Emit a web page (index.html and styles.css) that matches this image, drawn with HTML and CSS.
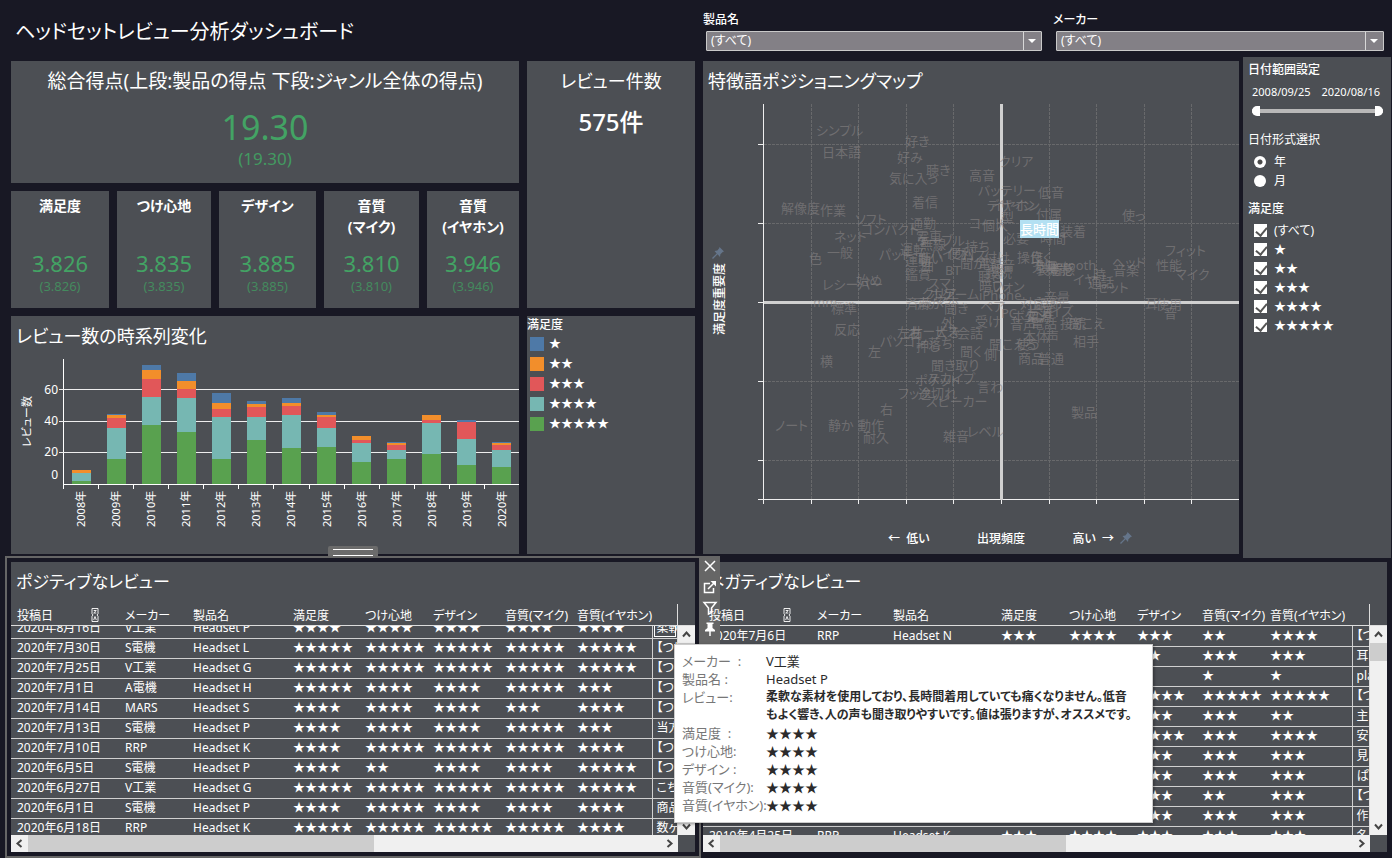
FILE: index.html
```html
<!DOCTYPE html>
<html lang="ja">
<head>
<meta charset="utf-8">
<title>ヘッドセットレビュー分析ダッシュボード</title>
<link rel="stylesheet" href="styles.css">
</head>
<body>
<svg class="sprite" aria-hidden="true">
  <symbol id="i-pin" viewBox="0 0 14 14"><path d="M8.500 1l4.500 4.500-1.300.4-2.300 2.300-.4 2.800L6.600 8.300 2 13l-1-1 4.700-4.600L3.500 5l2.800-.4L8.200 2.300z"/></symbol>
  <symbol id="i-sort" viewBox="0 0 8 14"><path fill="none" stroke="#fff" stroke-width=".9" d="M1 .5h6v5.200L6 7l1 1.300v5.200H1V8.300L2 7 1 5.700zM2.700 2.500h2.600L2.700 5h2.600M2.700 12L4 8.500 5.300 12"/></symbol>
  <symbol id="i-left" viewBox="0 0 17 17"><path fill="none" stroke="#444" stroke-width="2" d="M10.500 5l-4 3.500 4 3.500"/></symbol>
  <symbol id="i-right" viewBox="0 0 17 17"><path fill="none" stroke="#444" stroke-width="2" d="M6.500 5l4 3.500-4 3.500"/></symbol>
  <symbol id="i-up" viewBox="0 0 17 17"><path fill="none" stroke="#444" stroke-width="2" d="M5 10.500l3.500-4 3.500 4"/></symbol>
  <symbol id="i-down" viewBox="0 0 17 17"><path fill="none" stroke="#444" stroke-width="2" d="M5 6.500l3.500 4 3.500-4"/></symbol>
</svg>

<header class="header">
  <h1 class="title">ヘッドセットレビュー分析ダッシュボード</h1>
  <div class="filters">
    <div class="filter">
      <label for="product">製品名</label>
      <div class="select"><select id="product"><option>(すべて)</option></select></div>
    </div>
    <div class="filter">
      <label for="maker">メーカー</label>
      <div class="select"><select id="maker"><option>(すべて)</option></select></div>
    </div>
  </div>
</header>

<main>
<section class="upper">
  <div class="left">
    <section class="panel total">
      <h2>総合得点(上段:製品の得点 下段:ジャンル全体の得点)</h2>
      <p class="total-score">19.30</p>
      <p class="total-sub">(19.30)</p>
    </section>
    <section class="panel count">
      <h2>レビュー件数</h2>
      <p class="count-value">575件</p>
    </section>
    <div class="scores">
      <section class="panel score"><h3>満足度</h3><p class="score-value">3.826</p><p class="score-sub">(3.826)</p></section>
      <section class="panel score"><h3>つけ心地</h3><p class="score-value">3.835</p><p class="score-sub">(3.835)</p></section>
      <section class="panel score"><h3>デザイン</h3><p class="score-value">3.885</p><p class="score-sub">(3.885)</p></section>
      <section class="panel score"><h3>音質<br>(マイク)</h3><p class="score-value">3.810</p><p class="score-sub">(3.810)</p></section>
      <section class="panel score"><h3>音質<br>(イヤホン)</h3><p class="score-value">3.946</p><p class="score-sub">(3.946)</p></section>
    </div>
    <section class="panel trend">
      <h2>レビュー数の時系列変化</h2>
      <div class="chart">
        <div class="y-title">レビュー数</div>
        <div class="y-axis"><span>60</span><span>40</span><span>20</span><span class="zero">0</span></div>
        <div class="plot-col">
          <div class="plot">
            <i class="line l60"></i><i class="line l40"></i><i class="line l20"></i>
            <div class="bar"><b class="s2" style="--v:2"></b><b class="s4" style="--v:5"></b><b class="s5" style="--v:2"></b></div>
            <div class="bar"><b class="s1" style="--v:1"></b><b class="s2" style="--v:2"></b><b class="s3" style="--v:6"></b><b class="s4" style="--v:20"></b><b class="s5" style="--v:16"></b></div>
            <div class="bar"><b class="s1" style="--v:3"></b><b class="s2" style="--v:6"></b><b class="s3" style="--v:11"></b><b class="s4" style="--v:18"></b><b class="s5" style="--v:38"></b></div>
            <div class="bar"><b class="s1" style="--v:5"></b><b class="s2" style="--v:5"></b><b class="s3" style="--v:6"></b><b class="s4" style="--v:22"></b><b class="s5" style="--v:33"></b></div>
            <div class="bar"><b class="s1" style="--v:6"></b><b class="s2" style="--v:4"></b><b class="s3" style="--v:5"></b><b class="s4" style="--v:27"></b><b class="s5" style="--v:16"></b></div>
            <div class="bar"><b class="s1" style="--v:2"></b><b class="s2" style="--v:2"></b><b class="s3" style="--v:6"></b><b class="s4" style="--v:15"></b><b class="s5" style="--v:28"></b></div>
            <div class="bar"><b class="s1" style="--v:3"></b><b class="s2" style="--v:2"></b><b class="s3" style="--v:6"></b><b class="s4" style="--v:21"></b><b class="s5" style="--v:23"></b></div>
            <div class="bar"><b class="s1" style="--v:2"></b><b class="s2" style="--v:1"></b><b class="s3" style="--v:7"></b><b class="s4" style="--v:12"></b><b class="s5" style="--v:24"></b></div>
            <div class="bar"><b class="s2" style="--v:3"></b><b class="s3" style="--v:2"></b><b class="s4" style="--v:12"></b><b class="s5" style="--v:14"></b></div>
            <div class="bar"><b class="s1" style="--v:1"></b><b class="s2" style="--v:1"></b><b class="s3" style="--v:3"></b><b class="s4" style="--v:6"></b><b class="s5" style="--v:16"></b></div>
            <div class="bar"><b class="s2" style="--v:3"></b><b class="s3" style="--v:2"></b><b class="s4" style="--v:20"></b><b class="s5" style="--v:19"></b></div>
            <div class="bar"><b class="s1" style="--v:1"></b><b class="s3" style="--v:11"></b><b class="s4" style="--v:17"></b><b class="s5" style="--v:12"></b></div>
            <div class="bar"><b class="s1" style="--v:1"></b><b class="s2" style="--v:1"></b><b class="s3" style="--v:3"></b><b class="s4" style="--v:11"></b><b class="s5" style="--v:11"></b></div>
          </div>
          <div class="years"><span>2008年</span><span>2009年</span><span>2010年</span><span>2011年</span><span>2012年</span><span>2013年</span><span>2014年</span><span>2015年</span><span>2016年</span><span>2017年</span><span>2018年</span><span>2019年</span><span>2020年</span></div>
        </div>
      </div>
    </section>
    <section class="panel legend">
      <h4>満足度</h4>
      <ul>
        <li><b class="s1"></b>★</li>
        <li><b class="s2"></b>★★</li>
        <li><b class="s3"></b>★★★</li>
        <li><b class="s4"></b>★★★★</li>
        <li><b class="s5"></b>★★★★★</li>
      </ul>
    </section>
  </div>

  <section class="panel map">
    <h2>特徴語ポジショニングマップ</h2>
    <div class="map-body">
      <div class="map-side"><svg class="pin" viewBox="0 0 14 14"><use href="#i-pin"/></svg><span>満足度重要度</span></div>
      <svg class="map-plot" viewBox="764 104 475 396">
        <g class="grid">
          <path d="M764 144.500h475M764 223.500h475M764 381.500h475M764 460.500h475M811.500 104v396M858.500 104v396M906.500 104v396M953.500 104v396M1049.500 104v396M1096.500 104v396M1144.500 104v396M1191.500 104v396"/>
        </g>
        <path class="axis" d="M763.500 104v396M758 499.500h481M758 144.500h5M758 223.500h5M758 302.500h5M758 381.500h5M758 460.500h5M763.500 500v4M811.500 500v4M858.500 500v4M906.500 500v4M953.500 500v4M1001.500 500v4M1049.500 500v4M1096.500 500v4M1144.500 500v4M1191.500 500v4"/>
        <path class="center" d="M1001.500 104v396M764 302.500h475"/>
        <g class="words">
          <text x="816" y="135">シンプル</text><text x="822" y="157">日本語</text><text x="905" y="146">好き</text><text x="897" y="162">好み</text><text x="926" y="175">聴き</text><text x="889" y="183">気に入っ</text><text x="912" y="207">着信</text><text x="969" y="180">高音</text><text x="978" y="195">バッテリー</text><text x="999" y="166">クリア</text>
          <text x="781" y="213">解像度</text><text x="820" y="215">作業</text><text x="855" y="224">ソフト</text><text x="861" y="234">コンパクト</text><text x="910" y="228">通勤</text><text x="969" y="228">コード</text><text x="982" y="230">個人</text><text x="987" y="210">デザイン</text><text x="992" y="210">イヤホン</text><text x="1001" y="222">型</text>
          <text x="1038" y="197">低音</text><text x="1036" y="219">付属</text><text x="1122" y="220">使っ</text><text x="1060" y="236">装着</text><text x="1040" y="243">時間</text><text x="1003" y="243">必要</text><text x="834" y="241">ネット</text><text x="827" y="257">一般</text><text x="809" y="263">色</text><text x="879" y="259">パット</text>
          <text x="900" y="254">運転</text><text x="916" y="241">電車</text><text x="905" y="265">運動</text><text x="920" y="249">無線</text><text x="917" y="245">ケーブル</text><text x="918" y="263">聴い</text><text x="921" y="270">曲</text><text x="930" y="258">バイク</text><text x="948" y="258">便利</text><text x="965" y="251">持ち</text><text x="962" y="260">バス</text><text x="945" y="275">BT</text><text x="960" y="268">聞か</text><text x="978" y="268">電話</text><text x="984" y="262">付け</text><text x="989" y="270">録音</text><text x="905" y="279">鑑賞</text><text x="978" y="281">聴き</text><text x="986" y="277">接続</text><text x="979" y="291">暗い</text><text x="992" y="291">フォン</text>
          <text x="822" y="289">レシーバー</text><text x="856" y="285">始め</text><text x="928" y="288">スマ</text><text x="922" y="298">クリア</text><text x="930" y="299">ホン</text><text x="942" y="299">ゲーム</text><text x="979" y="300">iPhone</text><text x="1165" y="255">フィット</text><text x="1156" y="270">性能</text><text x="1175" y="279">マイク</text><text x="1112" y="267">ヘッド</text><text x="1113" y="275">音楽</text>
          <text x="1017" y="262">操作</text><text x="1030" y="262">良く</text><text x="1036" y="270">Bluetooth</text><text x="1032" y="271">充電</text><text x="1036" y="274">装着感</text><text x="1046" y="274">機能</text><text x="1073" y="284">イヤ</text><text x="1093" y="279">時</text><text x="1088" y="287">通話</text><text x="1096" y="292">セット</text><text x="1044" y="302">音量</text><text x="1020" y="308">対応</text><text x="1036" y="308">調節</text>
          <text x="813" y="307">mm</text><text x="831" y="313">標準</text><text x="906" y="308">斉藤</text><text x="917" y="308">声が</text><text x="935" y="306">マホ</text><text x="944" y="313">聞き</text><text x="980" y="311">ペア</text><text x="1001" y="318">PC</text><text x="1012" y="321">ボタン</text><text x="1026" y="321">電源</text><text x="1028" y="316">片耳</text><text x="1040" y="316">ノイズ</text><text x="1145" y="308">耳</text><text x="1156" y="309">使用</text><text x="1164" y="318">音</text>
          <text x="834" y="334">反応</text><text x="941" y="328">外</text><text x="975" y="326">受け</text><text x="1010" y="329">音声</text><text x="1031" y="328">電話</text><text x="1060" y="328">接続</text><text x="1069" y="328">聞こえ</text><text x="897" y="337">左右</text><text x="908" y="338">右</text><text x="910" y="336">サービス</text><text x="935" y="337">大き</text><text x="957" y="338">会話</text><text x="880" y="346">パソコン</text><text x="916" y="351">押し</text><text x="928" y="348">落ち</text>
          <text x="960" y="356">聞く</text><text x="984" y="359">側</text><text x="989" y="349">聞こえる</text><text x="1016" y="349">使う</text><text x="1023" y="341">本体</text><text x="1046" y="341">声</text><text x="1073" y="346">相手</text><text x="1018" y="363">商品</text><text x="1038" y="363">普通</text><text x="868" y="356">左</text><text x="820" y="366">横</text><text x="931" y="370">聞き取り</text><text x="915" y="385">ポケット</text><text x="928" y="383">スカイプ</text>
          <text x="898" y="398">フック</text><text x="918" y="398">途切れ</text><text x="926" y="406">スピーカー</text><text x="977" y="392">言わ</text><text x="880" y="414">右</text><text x="775" y="430">ノート</text><text x="828" y="430">静か</text><text x="858" y="430">動作</text><text x="863" y="442">耐久</text><text x="943" y="441">雑音</text><text x="967" y="436">レベル</text><text x="1071" y="417">製品</text>
        </g>
        <rect class="mark" x="1020" y="220" width="39" height="18"/>
        <text class="mark-text" x="1020" y="234">長時間</text>
      </svg>
    </div>
    <div class="map-foot"><span>←&nbsp; 低い</span><span>出現頻度</span><span class="high">高い&nbsp; →<svg class="pin" viewBox="0 0 14 14"><use href="#i-pin"/></svg></span></div>
  </section>

  <aside class="panel side">
    <h4>日付範囲設定</h4>
    <div class="dates"><span>2008/09/25</span><span>2020/08/16</span></div>
    <div class="range">
      <input type="range" class="from" aria-label="開始日" min="0" max="100" value="0">
      <input type="range" class="to" aria-label="終了日" min="0" max="100" value="100">
    </div>
    <h4 class="thin">日付形式選択</h4>
    <label class="opt"><input type="radio" name="fmt" checked>年</label>
    <label class="opt"><input type="radio" name="fmt">月</label>
    <h4>満足度</h4>
    <label class="opt"><input type="checkbox" checked>(すべて)</label>
    <label class="opt"><input type="checkbox" checked>★</label>
    <label class="opt"><input type="checkbox" checked>★★</label>
    <label class="opt"><input type="checkbox" checked>★★★</label>
    <label class="opt"><input type="checkbox" checked>★★★★</label>
    <label class="opt"><input type="checkbox" checked>★★★★★</label>
  </aside>
</section>

<section class="lower">
  <div class="selected">
    <div class="grip"></div>
    <section class="panel reviews positive">
      <h2>ポジティブなレビュー</h2>
      <table class="head">
        <colgroup><col class="c1"><col class="c2"><col class="c3"><col class="c4"><col class="c5"><col class="c6"><col class="c7"><col class="c8"><col></colgroup>
        <thead><tr><th>投稿日<svg class="sort"><use href="#i-sort"/></svg></th><th>メーカー</th><th>製品名</th><th>満足度</th><th>つけ心地</th><th>デザイン</th><th>音質(マイク)</th><th>音質(イヤホン)</th><th></th></tr></thead>
      </table>
      <div class="scroll">
        <div class="rows">
          <table>
            <colgroup><col class="c1"><col class="c2"><col class="c3"><col class="c4"><col class="c5"><col class="c6"><col class="c7"><col class="c8"><col></colgroup>
            <tbody>
              <tr><td>2020年8月16日</td><td>V工業</td><td>Headset P</td><td>★★★★</td><td>★★★★</td><td>★★★★</td><td>★★★★</td><td>★★★★</td><td class="picked">柔軟</td></tr>
              <tr><td>2020年7月30日</td><td>S電機</td><td>Headset L</td><td>★★★★★</td><td>★★★★★</td><td>★★★★★</td><td>★★★★★</td><td>★★★★★</td><td>【つけ</td></tr>
              <tr><td>2020年7月25日</td><td>V工業</td><td>Headset G</td><td>★★★★★</td><td>★★★★★</td><td>★★★★★</td><td>★★★★★</td><td>★★★★★</td><td>【つけ</td></tr>
              <tr><td>2020年7月1日</td><td>A電機</td><td>Headset H</td><td>★★★★★</td><td>★★★★</td><td>★★★★</td><td>★★★★★</td><td>★★★</td><td>【つけ</td></tr>
              <tr><td>2020年7月14日</td><td>MARS</td><td>Headset S</td><td>★★★★</td><td>★★★★</td><td>★★★★</td><td>★★★</td><td>★★★★</td><td>【つけ</td></tr>
              <tr><td>2020年7月13日</td><td>S電機</td><td>Headset P</td><td>★★★★</td><td>★★★★</td><td>★★★★</td><td>★★★★★</td><td>★★★</td><td>当方</td></tr>
              <tr><td>2020年7月10日</td><td>RRP</td><td>Headset K</td><td>★★★★</td><td>★★★★★</td><td>★★★★★</td><td>★★★★★</td><td>★★★★</td><td>【つけ</td></tr>
              <tr><td>2020年6月5日</td><td>S電機</td><td>Headset P</td><td>★★★★</td><td>★★</td><td>★★★★</td><td>★★★★</td><td>★★★★★</td><td>【つけ</td></tr>
              <tr><td>2020年6月27日</td><td>V工業</td><td>Headset G</td><td>★★★★★</td><td>★★★★★</td><td>★★★★★</td><td>★★★★★</td><td>★★★★★</td><td>こち</td></tr>
              <tr><td>2020年6月1日</td><td>S電機</td><td>Headset P</td><td>★★★★</td><td>★★★★★</td><td>★★★★</td><td>★★★★</td><td>★★★★</td><td>商品</td></tr>
              <tr><td>2020年6月18日</td><td>RRP</td><td>Headset K</td><td>★★★★★</td><td>★★★★★</td><td>★★★★★</td><td>★★★★★</td><td>★★★★</td><td>数ヶ</td></tr>
            </tbody>
          </table>
        </div>
        <div class="vbar"><button type="button" aria-label="上へ"><svg><use href="#i-up"/></svg></button><i></i><button type="button" aria-label="下へ"><svg><use href="#i-down"/></svg></button></div>
      </div>
      <div class="hbar"><button type="button" aria-label="左へ"><svg><use href="#i-left"/></svg></button><i></i><u></u><button type="button" aria-label="右へ"><svg><use href="#i-right"/></svg></button></div>
    </section>
    <div class="tools">
      <button type="button" aria-label="閉じる"><svg viewBox="0 0 16 16"><path d="M3 3l10 10M13 3L3 13"/></svg></button>
      <button type="button" aria-label="シートに移動"><svg viewBox="0 0 16 16"><path d="M8 4.500H2.500v9h9V9M6 10l6.500-6.500"/><path class="solid" d="M8.500 2h5.500v5.500z"/></svg></button>
      <button type="button" aria-label="フィルター"><svg viewBox="0 0 16 16"><path d="M2 2.500h12L9.500 8v4.500l-3 1.500V8z"/></svg></button>
      <button type="button" aria-label="固定"><svg viewBox="0 0 16 16"><path class="solid" d="M4.500 1.500h7v1.500h-1v4l2.500 2v1.500h-10V9l2.500-2V3h-1z"/><path d="M8 10v5"/></svg></button>
    </div>
    <div class="tip" role="tooltip">
      <dl>
        <dt>メーカー &nbsp;:</dt><dd>V工業</dd>
        <dt>製品名 :</dt><dd>Headset P</dd>
        <dt>レビュー:</dt><dd class="strong">柔軟な素材を使用しており、長時間着用していても痛くなりません。低音<br>もよく響き、人の声も聞き取りやすいです。値は張りますが、オススメです。</dd>
        <dt>満足度 &nbsp;:</dt><dd>★★★★</dd>
        <dt>つけ心地:</dt><dd>★★★★</dd>
        <dt>デザイン :</dt><dd>★★★★</dd>
        <dt>音質(マイク):</dt><dd>★★★★</dd>
        <dt>音質(イヤホン):</dt><dd>★★★★</dd>
      </dl>
    </div>
  </div>

  <div class="other">
    <section class="panel reviews negative">
      <h2>ネガティブなレビュー</h2>
      <table class="head">
        <colgroup><col class="c1"><col class="c2"><col class="c3"><col class="c4"><col class="c5"><col class="c6"><col class="c7"><col class="c8"><col></colgroup>
        <thead><tr><th>投稿日<svg class="sort"><use href="#i-sort"/></svg></th><th>メーカー</th><th>製品名</th><th>満足度</th><th>つけ心地</th><th>デザイン</th><th>音質(マイク)</th><th>音質(イヤホン)</th><th></th></tr></thead>
      </table>
      <div class="scroll">
        <div class="rows">
          <table>
            <colgroup><col class="c1"><col class="c2"><col class="c3"><col class="c4"><col class="c5"><col class="c6"><col class="c7"><col class="c8"><col></colgroup>
            <tbody>
              <tr><td>2020年7月6日</td><td>RRP</td><td>Headset N</td><td>★★★</td><td>★★★★</td><td>★★★</td><td>★★</td><td>★★★★</td><td>【つけ</td></tr>
              <tr><td></td><td></td><td></td><td></td><td></td><td>★★</td><td>★★★</td><td>★★★</td><td>耳か</td></tr>
              <tr><td></td><td></td><td></td><td></td><td></td><td>★</td><td>★</td><td>★</td><td>play</td></tr>
              <tr><td></td><td></td><td></td><td></td><td></td><td>★★★★</td><td>★★★★★</td><td>★★★★★</td><td>【つけ</td></tr>
              <tr><td></td><td></td><td></td><td></td><td></td><td>★★★</td><td>★★★</td><td>★★</td><td>主に</td></tr>
              <tr><td></td><td></td><td></td><td></td><td></td><td>★★★★</td><td>★★★</td><td>★★★★</td><td>安く</td></tr>
              <tr><td></td><td></td><td></td><td></td><td></td><td>★★★</td><td>★★★</td><td>★★★</td><td>見た</td></tr>
              <tr><td></td><td></td><td></td><td></td><td></td><td>★★★</td><td>★★★</td><td>★★★</td><td>ぱっ</td></tr>
              <tr><td></td><td></td><td></td><td></td><td></td><td>★★★</td><td>★★</td><td>★★★</td><td>【つけ</td></tr>
              <tr><td></td><td></td><td></td><td></td><td></td><td>★★★</td><td>★★★</td><td>★★★</td><td>作業</td></tr>
              <tr><td>2019年4月25日</td><td>RRP</td><td>Headset K</td><td>★★★</td><td>★★★★</td><td>★★★</td><td>★★★</td><td>★★★</td><td>名</td></tr>
            </tbody>
          </table>
        </div>
        <div class="vbar"><button type="button" aria-label="上へ"><svg><use href="#i-up"/></svg></button><i></i><u></u><button type="button" aria-label="下へ"><svg><use href="#i-down"/></svg></button></div>
      </div>
      <div class="hbar"><button type="button" aria-label="左へ"><svg><use href="#i-left"/></svg></button><i></i><u></u><button type="button" aria-label="右へ"><svg><use href="#i-right"/></svg></button></div>
    </section>
  </div>
</section>
</main>
</body>
</html>
```
FILE: styles.css
```css
* { box-sizing: border-box; }
body {
  margin: 0;
  background: #181824;
  color: #fff;
  font: 12px/16px "Noto Sans", "Noto Sans CJK JP", sans-serif;
  font-feature-settings: "palt";
  overflow-x: hidden;
}
h1, h2, h3, h4, p, ul, dl, dd { margin: 0; padding: 0; }
ul { list-style: none; }
button { border: 0; padding: 0; background: none; display: flex; align-items: center; justify-content: center; }
.sprite { display: none; }
.panel { background: #4c4f54; }
h2 { font-size: 18px; line-height: 28px; font-weight: 400; white-space: nowrap; }
h4 { font-size: 12px; line-height: 16px; font-weight: 500; }
.s1 { background: #4e79a7; }
.s2 { background: #f28e2b; }
.s3 { background: #e15759; }
.s4 { background: #76b7b2; }
.s5 { background: #59a14f; }

/* header */
.header { display: grid; grid-template-columns: 684fr 681fr; gap: 8px; padding: 0 8px 0 11px; height: 57px; }
.title { padding: 16px 0 0 4px; font-size: 20px; line-height: 32px; font-weight: 400; white-space: nowrap; }
.filters { display: grid; grid-template-columns: 339fr 331fr; gap: 11px; padding-top: 12px; }
.filter label { display: block; line-height: 16px; font-weight: 500; }
.select { position: relative; margin: 3px 0 0 3px; }
.select select {
  appearance: none; display: block; width: 100%; height: 20px;
  border: 1px solid #c9c9c9; border-radius: 1px; background: #838086; color: #fff;
  padding: 0 4px; font: inherit; font-feature-settings: inherit;
}
.select::before { content: ""; position: absolute; top: 1px; bottom: 1px; right: 18px; width: 1px; background: #d8d8d8; }
.select::after { content: ""; position: absolute; top: 8px; right: 6px; border: 4px solid transparent; border-top-color: #fff; border-bottom: 0; }

/* upper area */
.upper { display: grid; grid-template-columns: 692fr 540fr 148px; padding: 0 1px 0 11px; }
.left {
  margin: 4px 8px 4px 0; min-width: 0;
  display: grid; gap: 8px; grid-template-columns: 508fr 168fr; grid-template-rows: 122px 117px 238px;
}
.total, .count { padding-top: 6px; text-align: center; }
.total h2 { font-size: 19px; }
.count { grid-row: span 2; }
.total-score { margin-top: 12px; font-size: 34px; line-height: 40px; color: #43a364; }
.total-sub { margin-top: 2px; font-size: 17px; line-height: 20px; color: #439a61; }
.count-value { margin-top: 11px; font-size: 24px; line-height: 32px; font-weight: 500; }
.scores { display: grid; gap: 8px; grid-template-columns: 98fr 94fr 97fr 95fr 92fr; }
.score { padding-top: 4px; text-align: center; }
.score h3 { height: 56px; font-size: 14px; line-height: 21px; font-weight: 700; }
.score-value { font-size: 22px; line-height: 25px; color: #43a364; }
.score-sub { font-size: 13px; line-height: 20px; color: #448a5e; }

/* stacked bars */
.trend { padding: 6px 0 0 5px; }
.chart { display: flex; margin-top: 9px; }
.y-title { width: 22px; height: 126px; writing-mode: vertical-rl; text-orientation: sideways; transform: rotate(180deg); text-align: center; line-height: 22px; font-size: 11px; }
.y-axis { width: 20px; padding-top: 23px; display: flex; flex-direction: column; text-align: right; }
.y-axis span { height: 31px; line-height: 16px; }
.y-axis .zero { margin-top: -8px; }
.plot-col { flex: 1; margin-left: 5px; min-width: 0; }
.plot { position: relative; display: flex; height: 126px; border-left: 1px solid #fff; border-bottom: 1px solid #fff; }
.line { position: absolute; left: -5px; right: 0; height: 1px; background: #eee; }
.l60 { bottom: 75%; }
.l40 { bottom: 50%; }
.l20 { bottom: 25%; }
.bar { position: relative; flex: 1; display: flex; flex-direction: column; justify-content: flex-end; padding: 0 8px; }
.bar b { height: calc(var(--v) / 80 * 100%); }
.years { display: flex; padding-top: 6px; background: repeating-linear-gradient(90deg, #fff 0 1px, transparent 1px calc(100% / 13)) 0 0 / 100% 4px no-repeat; }
.years span { flex: 1; height: 50px; writing-mode: vertical-rl; text-orientation: sideways; transform: rotate(180deg); display: flex; align-items: center; justify-content: flex-end; line-height: 16px; font-size: 11px; }

.legend { padding: 1px 0 0 0; }
.legend ul { padding: 1px 0 0 3px; }
.legend li { display: flex; align-items: center; gap: 5px; height: 20px; }
.legend b { width: 14px; height: 14px; }

/* word map */
.map { margin: 4px 4px 4px 0; padding: 6px 0 0; min-width: 0; display: flex; flex-direction: column; }
.map h2 { padding-left: 5px; }
.map-body { display: flex; margin-top: 9px; }
.map-side { width: 61px; padding: 142px 0 0 8px; display: flex; flex-direction: column; align-items: flex-start; }
.map-side span { writing-mode: vertical-rl; text-orientation: sideways; transform: rotate(180deg); line-height: 18px; font-weight: 500; margin-top: 3px; }
.pin { width: 14px; height: 14px; fill: #65758a; }
.map-plot { flex: 1; min-width: 0; overflow: visible; }
.grid path { fill: none; stroke: #68696b; stroke-dasharray: 3 1; }
.axis { fill: none; stroke: #eee; }
.center { fill: none; stroke: #d0d0d0; stroke-width: 3; }
.words { font-size: 13px; fill: rgba(136, 132, 132, .6); }
.mark { fill: #b3e0f2; }
.mark-text { font-size: 13px; fill: #fff; font-weight: 500; }
.map-foot { display: flex; justify-content: space-between; padding: 31px 106px 0 185px; font-weight: 500; line-height: 16px; }
.high { display: flex; gap: 5px; }

/* side filters */
.side { padding: 5px 5px 0; }
.dates { display: flex; justify-content: space-between; padding: 6px 6px 0 4px; font-size: 11px; }
.range { position: relative; height: 12px; margin: 5px 3px 15px 4px; background: linear-gradient(#b8b8b8, #b8b8b8) 0 4px / 100% 4px no-repeat; }
.range input { position: absolute; inset: 0; width: 100%; height: 12px; margin: 0; appearance: none; background: none; pointer-events: none; }
.range input::-webkit-slider-thumb { appearance: none; pointer-events: auto; width: 8px; height: 10px; background: #fff; border: 0; }
.range .from::-webkit-slider-thumb { border-radius: 5px 0 0 5px; }
.range .to::-webkit-slider-thumb { border-radius: 0 5px 5px 0; }
.thin { font-weight: 400; margin-bottom: 4px; }
.opt { display: flex; align-items: center; height: 19px; padding-left: 6px; gap: 7px; }
.opt + h4 { margin: 11px 0 4px; }
.opt input { appearance: none; margin: 0; width: 13px; height: 13px; background: #fff; }
.opt input[type="radio"] { border-radius: 50%; margin-right: 1px; width: 12px; height: 12px; }
.opt input[type="radio"]:checked { background: radial-gradient(circle, #4a4a4a 0 2px, #fff 3px); }
.opt input[type="checkbox"] { position: relative; }
.opt input[type="checkbox"]::after { content: ""; position: absolute; left: 4px; top: 1px; width: 5px; height: 9px; border: solid #555; border-width: 0 2px 2px 0; transform: rotate(40deg); }

/* lower area */
.lower { display: grid; grid-template-columns: 696fr 691fr; padding-left: 5px; margin-top: -2px; }
.selected { position: relative; border: 2px solid #666; padding: 4px 4px 3px; min-width: 0; }
.other { padding: 6px 5px 6px 2px; min-width: 0; }
.grip { position: absolute; left: calc(50% - 25px); top: -12px; width: 50px; height: 10px; background: #6b6b6b; border-radius: 2px 2px 0 0; }
.grip::before { content: ""; position: absolute; left: 5px; right: 5px; top: 3px; height: 5px; border: solid #fff; border-width: 1px 0; }
.reviews { padding-top: 6px; }
.reviews h2 { padding-left: 5px; font-size: 17px; }
.reviews table { width: 100%; border-collapse: collapse; table-layout: fixed; }
.reviews th { position: relative; height: 21px; padding: 2px 0 0 6px; font-weight: 400; text-align: left; white-space: nowrap; }
.reviews .head { margin-top: 8px; width: calc(100% - 17px); border-right: 1px solid #ddd; }
.sort { width: 8px; height: 14px; position: absolute; right: 20px; top: 4px; }
.scroll { display: flex; height: 210px; border-top: 1px solid #ddd; }
.rows { flex: 1; min-width: 0; overflow: hidden; border-right: 1px solid #ddd; }
.reviews td { height: 20px; padding: 0 0 0 6px; line-height: 18px; border-bottom: 1px solid #d0d0d0; white-space: nowrap; overflow: hidden; }
.reviews td:last-child { padding-left: 4px; border-left: 1px solid #d0d0d0; }
.reviews td.picked { box-shadow: inset 0 0 0 1px #4c4f54, inset 0 0 0 2px #fff; }
.positive .rows table { margin-top: -8px; }
.c1 { width: 108px; } .c2 { width: 68px; } .c3 { width: 100px; } .c4 { width: 72px; }
.c5 { width: 68px; } .c6 { width: 72px; } .c7 { width: 72px; } .c8 { width: 81px; }
.negative .c2 { width: 76px; } .negative .c3 { width: 108px; } .negative .c4 { width: 68px; }
.negative .c6 { width: 65px; } .negative .c7 { width: 68px; } .negative .c8 { width: 88px; }
.vbar { width: 17px; background: #f0f0f0; display: flex; flex-direction: column; }
.vbar i { flex: 18 1 0; background: #cdcdcd; }
.vbar u { flex: 157 1 0; }
.vbar svg, .hbar svg { width: 17px; height: 17px; display: block; }
.hbar { display: flex; height: 17px; margin-right: 17px; background: #f0f0f0; }
.hbar i { flex: 346 1 0; background: #cdcdcd; }
.hbar u { flex: 287 1 0; }

.tools { position: absolute; left: 100%; top: -2px; width: 21px; height: 90px; background: #666; display: flex; flex-direction: column; align-items: center; gap: 5px; padding-top: 2px; }
.tools svg { width: 16px; height: 16px; fill: none; stroke: #fff; stroke-width: 1.500; display: block; }
.tools .solid { fill: #fff; stroke: none; }

.tip { position: absolute; z-index: 2; left: 667px; top: 86px; width: 479px; padding: 7px 7px 8px; background: #fff; border: 1px solid #ccc; color: #2b2b2b; box-shadow: 1px 1px 3px rgba(0, 0, 0, .4); font-size: 13px; line-height: 18px; white-space: nowrap; }
.tip dl { display: grid; grid-template-columns: 84px 1fr; }
.tip dt { color: #777; }
.tip .strong { font-weight: 700; font-size: 12px; }
```
